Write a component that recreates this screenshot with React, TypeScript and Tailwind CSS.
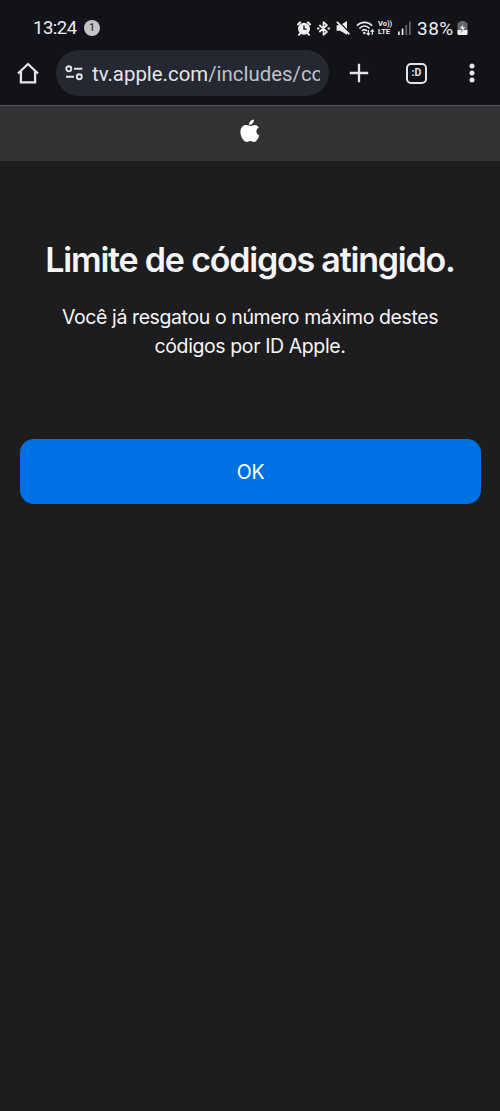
function AlarmIcon() {
  return (
    <svg className="ml-[196.5px] h-[15px] w-[14px] shrink-0" viewBox="0 0 14 15" fill="none">
      <path d="M.9 3.400 3.200 1.300M13.100 3.400 10.800 1.300M3 12.600 2 13.800M11 12.600l1 1.200" stroke="#eee" strokeWidth="2" strokeLinecap="round" />
      <circle cx="7" cy="7.700" r="6" fill="#eee" />
      <path d="M7 4.600v3.500h2.700" stroke="#121318" strokeWidth="1.300" />
    </svg>
  );
}

function BluetoothIcon() {
  return (
    <svg className="ml-[6px] h-[15px] w-[13px] shrink-0" viewBox="0 0 13 15" fill="none" stroke="#eee" strokeWidth="1.700" strokeLinejoin="round">
      <path d="m2.300 4 7.700 6.900-3.500 2.900V1.200L10 4.100 2.300 11" />
      <path d="M.2 7.500h2.200M10.600 7.500h2.200" strokeWidth="2" />
    </svg>
  );
}

function MuteIcon() {
  return (
    <svg className="ml-[6px] h-[14px] w-[15px] shrink-0" viewBox="0 0 15 14">
      <path d="M.6 4.300h3.600L11 0v13.800L4.200 9.700H.6z" fill="#eee" />
      <path d="m2 0 13 13" stroke="#121318" strokeWidth="1.500" />
      <path d="m.900 .900 12.500 12.500" stroke="#eee" strokeWidth="1.700" />
    </svg>
  );
}

function WifiIcon() {
  return (
    <svg className="ml-[5px] h-[15px] w-[19px] shrink-0" viewBox="0 0 19 15" fill="none" stroke="#eee">
      <path d="M1 4.800C5 .200 12 .200 16 4.800M3.400 7.500c3-3.300 7.200-3.300 10.100 0M5.900 9.900c1.500-1.700 3.600-1.700 5 0" strokeWidth="1.600" />
      <circle cx="8.300" cy="12" r="1.200" fill="#eee" stroke="none" />
      <path d="M12.300 9v4.800m-1.600-1.700 1.600 1.700 1.600-1.700M16.300 13.800V9m-1.600 1.700L16.300 9l1.600 1.700" strokeWidth="1.200" />
    </svg>
  );
}

function SignalIcon() {
  return (
    <svg className="ml-[4px] h-[14px] w-[13px] shrink-0" viewBox="0 0 13 14">
      <path d="M0 10.500h1.700V14H0zM3.700 7.500h1.700V14H3.700z" fill="#eee" />
      <path d="M7.400 4h1.700v10H7.400zM11 .500h1.700V14H11z" fill="#66676b" />
    </svg>
  );
}

function BatteryIcon() {
  return (
    <svg className="h-[14px] w-[11px] shrink-0" viewBox="0 0 11 14">
      <path d="M3 0h5v1.500h1.200q1.300 0 1.300 1.300v9.700q0 1.500-1.500 1.500H2Q.500 14 .500 12.500V2.800Q.500 1.500 1.800 1.500H3z" fill="#66676b" />
      <path d="M.5 9h10v3.500Q10.500 14 9 14H2Q.500 14 .500 12.500z" fill="#eee" />
      <path d="M6.800 2.600 2.300 7.800h2.700l-.8 3.700 4.600-5.500H6z" fill="#fff" stroke="#34353a" strokeWidth=".4" />
    </svg>
  );
}

function StatusBar() {
  return (
    <div className="flex h-[50px] items-center pt-[6px] pl-[33px] text-[#eee]">
      <span className="w-[44px] shrink-0 font-['Roboto',sans-serif] text-[18.500px] leading-none tracking-[-0.5px]">13:24</span>
      <span className="ml-[7px] flex size-4 shrink-0 items-center justify-center rounded-full bg-[#c4c4c4] font-['Roboto',sans-serif] text-[10.5px] leading-none font-medium text-[#35363a]">1</span>
      <AlarmIcon />
      <BluetoothIcon />
      <MuteIcon />
      <WifiIcon />
      <span className="ml-[3.5px] flex w-[16px] shrink-0 flex-col font-['Roboto',sans-serif] text-[7.5px] leading-[8px] font-bold whitespace-nowrap">
        <span>Vo))</span>
        <span>LTE</span>
      </span>
      <SignalIcon />
      <span className="ml-[6px] w-[39.5px] shrink-0 pt-px font-['Roboto',sans-serif] text-[19px] leading-none tracking-[0.5px]">38%</span>
      <BatteryIcon />
    </div>
  );
}

function Toolbar() {
  return (
    <div className="flex h-[55px] items-start">
      <div className="flex h-[46px] w-[56px] shrink-0 items-center pl-[17px]">
        <svg className="h-[22px] w-[22px]" viewBox="0 0 22 22" fill="none" stroke="#e4e4ea" strokeWidth="2.300">
          <path d="M1 11.500 11 2l10 9.500M3.900 9v11.400h14.200V9" />
        </svg>
      </div>
      <div className="flex h-[46px] w-[273px] shrink-0 items-center rounded-full bg-[#242831] pl-[9px]">
        <svg className="h-[16px] w-[19px] shrink-0" viewBox="0 0 19 16" fill="none" stroke="#e4e4ea" strokeWidth="1.900">
          <circle cx="3.800" cy="3.700" r="2.500" />
          <path d="M9 3.700h8.300M1 11.800h8" />
          <circle cx="14.300" cy="11.800" r="2.500" />
        </svg>
        <div className="ml-[8px] w-[228px] overflow-hidden pt-[2px] font-['Roboto',sans-serif] text-[20.4px] leading-[28px] whitespace-nowrap text-[#e4e4ea]">
          tv.apple.com<span className="text-[#c0c1c9]">/includes/co</span>
        </div>
      </div>
      <div className="flex h-[46px] w-[60px] shrink-0 items-center justify-center">
        <svg className="h-[20px] w-[20px]" viewBox="0 0 20 20" stroke="#e4e4ea" strokeWidth="2.300">
          <path d="M10 .800v18.400M.800 10h18.400" />
        </svg>
      </div>
      <div className="flex h-[46px] w-[55px] shrink-0 items-center justify-center">
        <div className="flex size-[21px] items-center justify-center rounded-[5px] border-2 border-[#e4e4ea] font-['Roboto',sans-serif] text-[10.500px] leading-none font-bold text-[#e4e4ea]">:D</div>
      </div>
      <div className="flex h-[46px] flex-1 items-center justify-center">
        <svg className="h-[20px] w-[6px]" viewBox="0 0 6 20" fill="#e4e4ea">
          <circle cx="3" cy="3" r="2.500" />
          <circle cx="3" cy="10" r="2.500" />
          <circle cx="3" cy="17" r="2.500" />
        </svg>
      </div>
    </div>
  );
}

function AppleHeader() {
  return (
    <header className="flex h-[56px] justify-center border-t border-[#535358] bg-[#333335] pt-[13px]">
      <svg className="h-[24px] w-[20px]" viewBox="0 0 20 24" fill="#fff">
        <path d="M13.900.400c.2 1.500-.4 2.900-1.300 3.900-.9 1.100-2.200 1.800-3.500 1.700-.2-1.400.4-2.800 1.300-3.800C11.300 1.200 12.800.400 13.900.400Z" />
        <path d="M18.800 8.400c-1.700 1-2.400 2.200-2.400 3.900 0 2 1.100 3.500 2.900 4.300-.8 2.500-2.900 6.300-5 6.300-1.400 0-2.200-.8-3.900-.8s-2.500.8-3.900.8C3.800 22.900.400 17.800.400 13.100c0-4.300 2.600-7 5.700-7 1.700 0 3 1 4.200 1 1.100 0 2.700-1.100 4.600-1.100 1.600 0 3 .9 3.900 2.400Z" />
      </svg>
    </header>
  );
}

export default function App() {
  return (
    <div className="flex min-h-[1111px] w-[500px] flex-col overflow-hidden bg-[#1d1d1f]">
      <div className="bg-[#121318]">
        <StatusBar />
        <Toolbar />
      </div>
      <AppleHeader />
      <main className="flex flex-col px-[20px] pt-[78px] font-['Inter',sans-serif] text-[#f5f5f7]">
        <h1 className="text-center text-[34px] leading-[42px] font-semibold tracking-[-1.2px] whitespace-nowrap">Limite de códigos atingido.</h1>
        <p className="mt-[22px] text-center text-[19.500px] leading-[29px] tracking-[-0.400px]">
          Você já resgatou o número máximo destes
          <br />
          códigos por ID Apple.
        </p>
        <button className="mt-[78px] h-[65px] w-[461px] rounded-[14px] bg-[#0071e3] pt-[2px] text-[19.500px] tracking-[-0.300px] text-white">OK</button>
      </main>
    </div>
  );
}
